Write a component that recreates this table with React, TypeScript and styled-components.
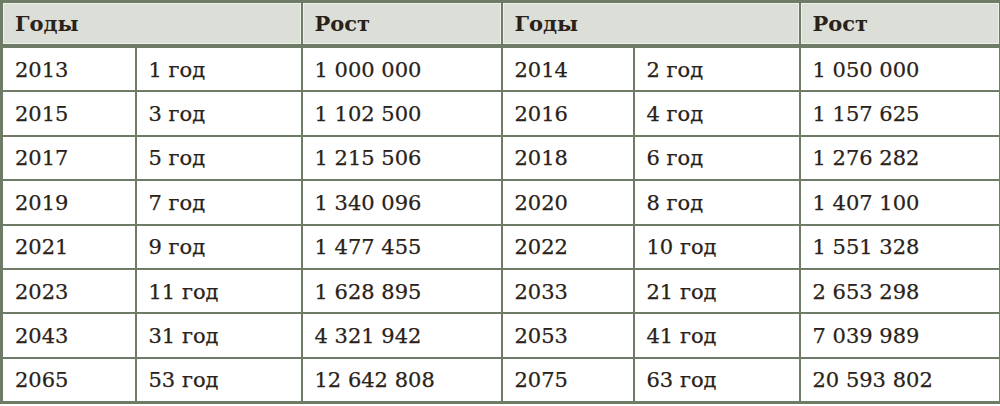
import React from "react";
import styled, { createGlobalStyle } from "styled-components";

const GlobalStyle = createGlobalStyle`
  body {
    margin: 0;
    background: #ffffff;
    font-family: "DejaVu Serif", "Liberation Serif", serif;
  }
`;

const BORDER = "#6e7b67";

const Table = styled.table`
  width: 999px;
  border-collapse: collapse;
  table-layout: fixed;
  border: 3px solid ${BORDER};
  color: #2a2219;
  font-size: 21px;
`;

const HeadCell = styled.th`
  height: 41px;
  padding: 0 0 0 12px;
  text-align: left;
  font-weight: bold;
  background: #dcdfd8;
  border: 2px solid ${BORDER};
  border-bottom-width: 4px;
  box-shadow: inset 0 0 0 1px #eef0ea;
`;

const Cell = styled.td`
  height: 41.4px;
  padding: 1px 0 0 12px;
  border: 2px solid ${BORDER};
  white-space: nowrap;
  -webkit-text-stroke: 0.25px #2a2219;
`;

const rows: [string, string, string, string, string, string][] = [
  ["2013", "1 год", "1 000 000", "2014", "2 год", "1 050 000"],
  ["2015", "3 год", "1 102 500", "2016", "4 год", "1 157 625"],
  ["2017", "5 год", "1 215 506", "2018", "6 год", "1 276 282"],
  ["2019", "7 год", "1 340 096", "2020", "8 год", "1 407 100"],
  ["2021", "9 год", "1 477 455", "2022", "10 год", "1 551 328"],
  ["2023", "11 год", "1 628 895", "2033", "21 год", "2 653 298"],
  ["2043", "31 год", "4 321 942", "2053", "41 год", "7 039 989"],
  ["2065", "53 год", "12 642 808", "2075", "63 год", "20 593 802"],
];

const widths = [134, 166, 200, 132, 166, 201];

const App = () => {
  return (
    <>
      <GlobalStyle />
      <Table>
        <colgroup>
          {widths.map((w, i) => (
            <col key={i} style={{ width: w }} />
          ))}
        </colgroup>
        <thead>
          <tr>
            <HeadCell colSpan={2}>Годы</HeadCell>
            <HeadCell>Рост</HeadCell>
            <HeadCell colSpan={2}>Годы</HeadCell>
            <HeadCell>Рост</HeadCell>
          </tr>
        </thead>
        <tbody>
          {rows.map((r, i) => (
            <tr key={i}>
              {r.map((v, j) => (
                <Cell key={j}>{v}</Cell>
              ))}
            </tr>
          ))}
        </tbody>
      </Table>
    </>
  );
};

export default App;
